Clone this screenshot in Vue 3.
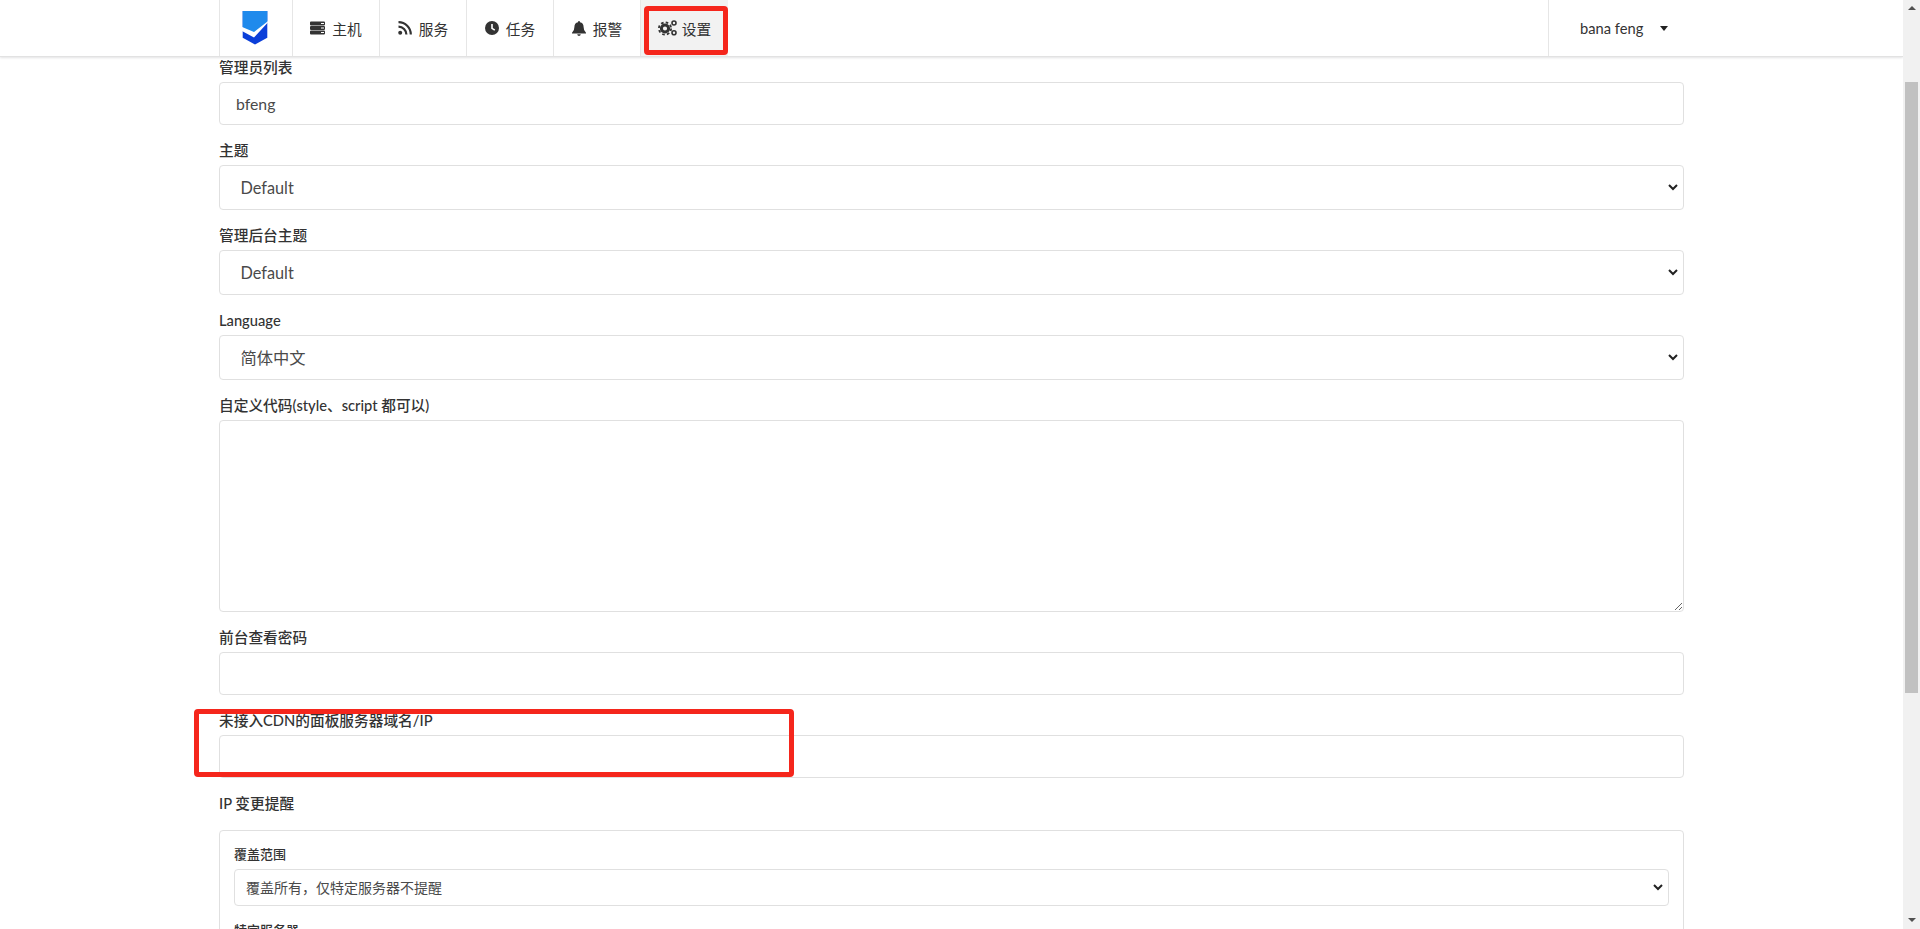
<template>
  <div class="app">
    <div class="page">
      <nav class="topbar">
        <div class="topbar-inner">
          <a class="item logo">
            <svg width="32" height="36" viewBox="0 0 32 36">
              <path d="M2.7 1H27.3V27.7L15 34.5L2.7 27.7Z" fill="#0b3fd9" />
              <path d="M2.7 1H27.3V12L14 24L2.7 18Z" fill="#1f8aec" />
              <path d="M1 16.5L14 22L32 8L14 27.5L1 20.5Z" fill="#fff" />
            </svg>
          </a>
          <a class="item">
            <svg class="icon" width="15" height="14" viewBox="0 0 15 14">
              <path d="M0 1.5Q0 .5 1 .5H14Q15 .5 15 1.5V3.5Q15 4.5 14 4.5H1Q0 4.5 0 3.5ZM0 6Q0 5 1 5H14Q15 5 15 6V8Q15 9 14 9H1Q0 9 0 8ZM0 10.5Q0 9.5 1 9.5H14Q15 9.5 15 10.5V12.5Q15 13.5 14 13.5H1Q0 13.5 0 12.5Z" fill="#333" />
              <path d="M11 2.5H14M11 7H14M11 11.5H14" stroke="#fff" stroke-width="1" />
            </svg>
            主机
          </a>
          <a class="item">
            <svg class="icon" width="14" height="14" viewBox="0 0 14 14">
              <circle cx="2.2" cy="11.8" r="2" fill="#333" />
              <path d="M0.5 5.6A8 8 0 0 1 8.4 13.5" fill="none" stroke="#333" stroke-width="2.2" />
              <path d="M0.5 1.2A12.3 12.3 0 0 1 12.8 13.5" fill="none" stroke="#333" stroke-width="2.2" />
            </svg>
            服务
          </a>
          <a class="item">
            <svg class="icon" width="14" height="14" viewBox="0 0 14 14">
              <circle cx="7" cy="7" r="7" fill="#333" />
              <path d="M7 3V7.4L9.8 9.2" fill="none" stroke="#fff" stroke-width="1.6" />
            </svg>
            任务
          </a>
          <a class="item">
            <svg class="icon" width="14" height="15" viewBox="0 0 14 15">
              <path d="M7 0Q8 0 8 1.2Q11.6 2 11.6 6Q11.6 10 14 11.8V12.6H0V11.8Q2.4 10 2.4 6Q2.4 2 6 1.2Q6 0 7 0ZM5.2 13.3H8.8Q8.6 15 7 15Q5.4 15 5.2 13.3Z" fill="#333" />
            </svg>
            报警
          </a>
          <a class="item active">
            <svg class="icon" width="19" height="16" viewBox="0 0 19 16">
              <circle cx="7" cy="8.5" r="3.6" fill="none" stroke="#333" stroke-width="3" />
              <circle cx="7" cy="8.5" r="6.1" fill="none" stroke="#333" stroke-width="1.8" stroke-dasharray="2.6 2.19" />
              <circle cx="16" cy="3" r="2" fill="none" stroke="#333" stroke-width="1.6" />
              <circle cx="16" cy="12.8" r="2" fill="none" stroke="#333" stroke-width="1.6" />
            </svg>
            设置
          </a>
          <div class="user-menu">
            <span>bana feng</span>
            <i class="caret"></i>
          </div>
        </div>
      </nav>

      <form class="settings">
        <div class="field">
          <label>管理员列表</label>
          <input type="text" value="bfeng" />
        </div>
        <div class="field">
          <label>主题</label>
          <select><option>Default</option></select>
        </div>
        <div class="field">
          <label>管理后台主题</label>
          <select><option>Default</option></select>
        </div>
        <div class="field">
          <label>Language</label>
          <select><option>简体中文</option></select>
        </div>
        <div class="field">
          <label>自定义代码(style、script 都可以)</label>
          <textarea></textarea>
        </div>
        <div class="field">
          <label>前台查看密码</label>
          <input type="text" />
        </div>
        <div class="field">
          <label>未接入CDN的面板服务器域名/IP</label>
          <input type="text" />
        </div>
        <div class="field">
          <label class="plain">IP 变更提醒</label>
          <div class="box">
            <div class="sub-field">
              <label>覆盖范围</label>
              <select><option>覆盖所有，仅特定服务器不提醒</option></select>
            </div>
            <div class="sub-field">
              <label>特定服务器</label>
              <input type="text" />
            </div>
          </div>
        </div>
      </form>
    </div>

    <div class="scrollbar">
      <i class="arrow up"></i>
      <div class="thumb"></div>
      <i class="arrow down"></i>
    </div>

    <div class="mark mark-nav"></div>
    <div class="mark mark-field"></div>
  </div>
</template>

<script setup>
</script>

<style>
html,
body {
  overflow: hidden;
  background: #fff;
}
</style>

<style scoped>
.app {
  position: relative;
  display: flex;
  height: 100vh;
  overflow: hidden;
  font-family: "Lato", "Noto Sans CJK SC", sans-serif;
  font-size: 14.7px;
  color: #333;
}

.page {
  flex: 1;
  min-width: 0;
  overflow: hidden;
}

/* top menu */
.topbar {
  height: 56px;
  border-bottom: 1px solid #e2e2e2;
  box-shadow: 0 1px 2px rgba(34, 36, 38, 0.12);
}

.topbar-inner {
  display: flex;
  width: 1465px;
  height: 100%;
  margin: 0 auto;
}

.item {
  display: flex;
  align-items: center;
  justify-content: center;
  gap: 7px;
  box-sizing: border-box;
  width: 87px;
  border-left: 1px solid #e6e6e6;
}

.logo {
  width: 73px;
}

.icon {
  flex-shrink: 0;
}

.active {
  background: #f2f2f2;
  width: 88px;
  gap: 5px;
}

.user-menu {
  display: flex;
  align-items: center;
  margin-left: auto;
  width: 136px;
  padding-left: 31px;
  box-sizing: border-box;
  border-left: 1px solid #e6e6e6;
}

.caret {
  width: 0;
  height: 0;
  margin-left: 17px;
  border: 4.5px solid transparent;
  border-top: 5px solid #222;
  border-bottom: 0;
}

/* form */
.settings {
  width: 1465px;
  margin: 0 auto;
  padding-top: 2px;
}

.field {
  margin-bottom: 17px;
}

.field > label {
  display: block;
  height: 18px;
  line-height: 16px;
  margin-bottom: 5px;
  font-weight: 500;
}

.field > label.plain {
  margin-bottom: 17px;
}

input,
select,
textarea {
  display: block;
  width: 100%;
  box-sizing: border-box;
  border: 1px solid #e0e0e0;
  border-radius: 4px;
  background-color: #fff;
  color: #4a4a4a;
  font-family: inherit;
  outline: none;
}

input {
  height: 43px;
  padding: 0 16px;
  font-size: 15.8px;
}

select {
  appearance: none;
  height: 45px;
  padding: 0 20.5px;
  font-size: 16.3px;
  background-image: url("data:image/svg+xml,%3Csvg xmlns='http://www.w3.org/2000/svg' width='10' height='7'%3E%3Cpath d='M1 1L5 5L9 1' fill='none' stroke='%23222' stroke-width='2'/%3E%3C/svg%3E");
  background-repeat: no-repeat;
  background-position: right 5px center;
}

textarea {
  height: 192px;
  resize: vertical;
}

.box {
  padding: 14px;
  border: 1px solid #e0e0e0;
  border-radius: 4px;
}

.sub-field {
  margin-bottom: 15px;
}

.sub-field label {
  display: block;
  height: 18px;
  line-height: 18px;
  margin-bottom: 6px;
  font-size: 13px;
  font-weight: 500;
}

.sub-field select,
.sub-field input {
  height: 37px;
  padding: 0 11px;
  font-size: 14px;
}

/* drawn scrollbar */
.scrollbar {
  display: flex;
  flex-direction: column;
  align-items: center;
  width: 17px;
  background: #f1f1f1;
}

.arrow {
  width: 0;
  height: 0;
  border: 4px solid transparent;
}

.arrow.up {
  margin-top: 6px;
  border-top: 0;
  border-bottom: 4px solid #505050;
}

.arrow.down {
  margin-top: auto;
  margin-bottom: 7px;
  border-bottom: 0;
  border-top: 4px solid #505050;
}

.thumb {
  width: 13px;
  height: 611px;
  margin-top: 72px;
  background: #c1c1c1;
}

/* red annotations drawn over the screenshot */
.mark {
  position: absolute;
  box-sizing: border-box;
  border: 5px solid #f5261c;
  border-radius: 4px;
}

.mark-nav {
  left: 644px;
  top: 6px;
  width: 84px;
  height: 49px;
}

.mark-field {
  left: 194px;
  top: 709px;
  width: 600px;
  height: 68px;
}
</style>
